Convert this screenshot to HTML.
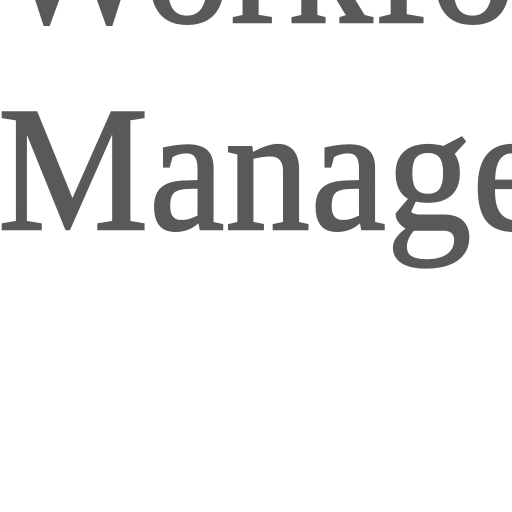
<!DOCTYPE html>
<html><head><style>
html,body{margin:0;padding:0;background:#fff;width:512px;height:512px;overflow:hidden;position:relative}
.t{position:absolute;left:-2px;font-family:"Liberation Serif",serif;font-size:178px;color:#58595b;line-height:1;white-space:nowrap;transform:scaleX(0.95);transform-origin:0 0;letter-spacing:1px;-webkit-text-stroke:2.5px #58595b}
.w{position:absolute;left:0;top:0;width:512px;height:512px;overflow:hidden}
</style></head><body>
<div class="w">
<div class="t" style="top:-127px">Workforce</div>
<div class="t" style="top:80px">Management</div>
</div>
</body></html>
